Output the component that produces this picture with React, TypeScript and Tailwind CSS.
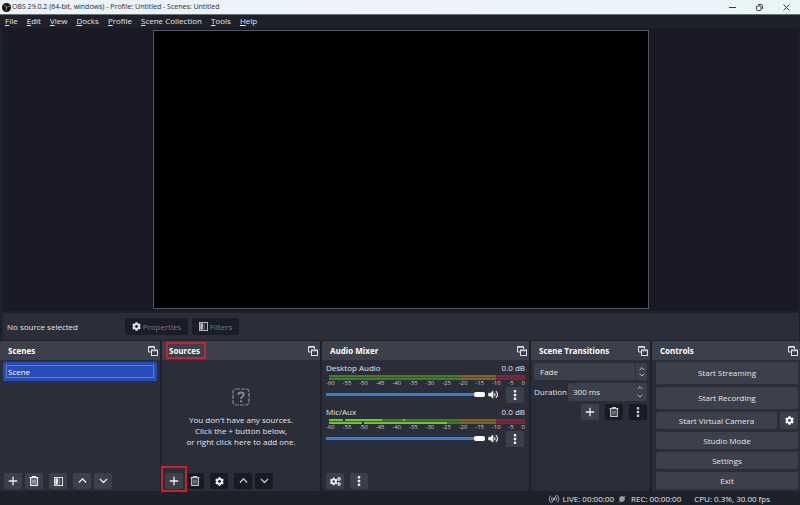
import { useState } from 'react';
import type { ReactNode } from 'react';
import { clsx } from 'clsx';
import { FaCog, FaCogs } from 'react-icons/fa';

const menus = ['File', 'Edit', 'View', 'Docks', 'Profile', 'Scene Collection', 'Tools', 'Help'];

const ticks = ['-60', '-55', '-50', '-45', '-40', '-35', '-30', '-25', '-20', '-15', '-10', '-5', '0'];

const channels = [
  { name: 'Desktop Audio', active: false },
  { name: 'Mic/Aux', active: true },
];

function ObsLogo() {
  return (
    <svg viewBox="0 0 20 20" className="size-[9px] shrink-0">
      <circle cx="10" cy="10" r="10" fill="#111" />
      <g fill="none" stroke="#b5bcc0" strokeWidth="1.6" strokeLinecap="round">
        <path d="M7 4c-1 3 0 5 3 6" />
        <path d="M16 8c-3-1.500-5 0-6 2" />
        <path d="M8 16c2.500-1.500 3-4 2-6" />
      </g>
    </svg>
  );
}

function PopOutIcon() {
  return (
    <svg viewBox="0 0 10 10" className="size-[10px]" fill="none" stroke="#dfe1e6">
      <path d="M3 6H.5V.500H6.500V3" />
      <path d="M.5 1.200H6.500" />
      <rect x="3.500" y="4" width="6" height="5.500" />
      <path d="M3.500 4.700H9.500" />
    </svg>
  );
}

function PlusIcon() {
  return (
    <svg viewBox="0 0 10 10" className="size-[10px]" stroke="currentColor" strokeWidth="1.300">
      <path d="M5 .8V9.200M.8 5H9.200" />
    </svg>
  );
}

function TrashIcon() {
  return (
    <svg viewBox="0 0 10 10" className="size-[10px]" fill="none" stroke="currentColor">
      <path d="M.6 1.700H9.400M3.500 1.300V.600H6.500V1.300" strokeWidth="1.200" />
      <path d="M1.700 2V9.300H8.300V2" strokeWidth="1.200" />
      <path d="M3.800 3.500V7.700M5 3.500V7.700M6.200 3.500V7.700" strokeWidth=".7" />
    </svg>
  );
}

function FilterIcon() {
  return (
    <svg viewBox="0 0 10 10" className="size-[9px]">
      <rect x=".5" y=".5" width="9" height="9" fill="none" stroke="currentColor" />
      <rect x="1.500" y="1.500" width="2.800" height="7" fill="currentColor" />
      <rect x="5.200" y="1.500" width="1.500" height="7" fill="currentColor" opacity=".45" />
    </svg>
  );
}

function Chevron({ down = false, small = false }: { down?: boolean; small?: boolean }) {
  return (
    <svg viewBox="0 0 10 6" className={small ? 'w-[6px]' : 'w-[9px]'} fill="none" stroke="currentColor" strokeWidth="1.500">
      <path d={down ? 'M1 1l4 4 4-4' : 'M1 5l4-4 4 4'} />
    </svg>
  );
}

function DotsIcon() {
  return (
    <svg viewBox="0 0 4 10" className="h-[10px]" fill="currentColor">
      <rect x=".8" y="0" width="2.400" height="2.400" rx=".5" />
      <rect x=".8" y="3.800" width="2.400" height="2.400" rx=".5" />
      <rect x=".8" y="7.600" width="2.400" height="2.400" rx=".5" />
    </svg>
  );
}

function SpeakerIcon() {
  return (
    <svg viewBox="0 0 12 10" className="w-[11px]" fill="none" stroke="#f0f0f2" strokeWidth="1.200">
      <path d="M.5 3.500H2.500L5.500 1V9L2.500 6.500H.5Z" fill="#f0f0f2" strokeWidth=".6" />
      <path d="M7 3.300q1.300 1.700 0 3.400M8.600 1.300q3.600 3.700 0 7.400" />
    </svg>
  );
}

function LiveIcon() {
  return (
    <svg viewBox="0 0 12 10" className="w-3" fill="none" stroke="#b0b2ba" strokeWidth=".9">
      <path d="M2.500 1.500q-3 3.500 0 7M4.300 3q-1.600 2 0 4M9.500 1.500q3 3.500 0 7M7.700 3q1.600 2 0 4" />
      <circle cx="6" cy="5" r=".8" fill="#b0b2ba" />
      <path d="M3.500 9L8.500 1" />
    </svg>
  );
}

function RecIcon() {
  return (
    <svg viewBox="0 0 10 10" className="w-2" fill="none" stroke="#b0b2ba">
      <circle cx="5" cy="5" r="3" fill="#8d9099" />
      <path d="M1 9.500L9.500 1" />
    </svg>
  );
}

function ToolButton({ label, dark, children }: { label: string; dark?: boolean; children: ReactNode }) {
  return (
    <button
      aria-label={label}
      className={clsx(
        'flex h-4 w-[18px] items-center justify-center rounded-xs',
        dark ? 'bg-[#181a24] text-[#c6c8ce]' : 'bg-[#3c404b] text-[#eeeff2]'
      )}
    >
      {children}
    </button>
  );
}

function Dock({ title, marked, children }: { title: string; marked?: boolean; children: ReactNode }) {
  return (
    <section className="flex min-w-0 flex-col rounded-xs bg-[#2b2d38]">
      <header className="flex h-[19px] items-center justify-between rounded-t-xs bg-[#3c404b] pr-0.5">
        <h2
          className={clsx(
            'text-[8px] font-bold text-white',
            marked ? 'ml-1 border-2 border-[#c9222f] pr-1 pl-px leading-[13px]' : 'ml-2 leading-[14px]'
          )}
        >
          {title}
        </h2>
        <button aria-label={`Pop out ${title}`}>
          <PopOutIcon />
        </button>
      </header>
      {children}
    </section>
  );
}

function Meter({ active }: { active: boolean }) {
  return (
    <div className="relative ml-[3px] flex h-[5px]">
      <div className="w-[67%] bg-[#437a24]" />
      <div className="w-[18%] bg-[#7d6525]" />
      <div className="w-[15%] bg-[#7f2637]" />
      <div className="absolute inset-x-0 top-0.5 h-px bg-[#2b2d38]/40" />
      {active && (
        <>
          <div className="absolute top-0 left-0 h-0.5 w-[27%] bg-[#72c432]" />
          <div className="absolute top-[3px] left-0 h-0.5 w-[60%] bg-[#72c432]" />
          <div className="absolute top-0 left-[7%] h-0.5 w-0.5 bg-[#15240e]" />
          <div className="absolute top-[3px] left-[17%] h-0.5 w-0.5 bg-[#15240e]" />
          <div className="absolute top-0 left-[38%] h-0.5 w-0.5 bg-[#72c432]" />
        </>
      )}
    </div>
  );
}

function Channel({ name, active }: { name: string; active: boolean }) {
  const [volume, setVolume] = useState(100);

  return (
    <div className="h-11 pr-1 pl-1">
      <div className="mb-px flex h-3 items-center justify-between leading-3">
        <span>{name}</span>
        <span>0.0 dB</span>
      </div>
      <Meter active={active} />
      <div className="flex h-[7px] justify-between text-[6px] leading-[7px] text-[#c9cbd1]">
        {ticks.map((tick) => (
          <span key={tick}>{tick}</span>
        ))}
      </div>
      <div className="flex h-[15px] items-center">
        <input
          type="range"
          aria-label={`${name} volume`}
          value={volume}
          onChange={(e) => setVolume(Number(e.target.value))}
          className="h-[5px] min-w-0 flex-1 appearance-none bg-transparent [&::-webkit-slider-runnable-track]:h-[5px] [&::-webkit-slider-runnable-track]:border-y [&::-webkit-slider-runnable-track]:border-[#2b2d38] [&::-webkit-slider-runnable-track]:bg-[#2f80d0] [&::-webkit-slider-thumb]:-mt-px [&::-webkit-slider-thumb]:h-[5px] [&::-webkit-slider-thumb]:w-[11px] [&::-webkit-slider-thumb]:appearance-none [&::-webkit-slider-thumb]:rounded-xs [&::-webkit-slider-thumb]:bg-white"
        />
        <button aria-label={`Mute ${name}`} className="mr-[7px] ml-[3px]">
          <SpeakerIcon />
        </button>
        <ToolButton label={`${name} options`}>
          <DotsIcon />
        </ToolButton>
        <div className="w-px" />
      </div>
    </div>
  );
}

function ControlButton({ tall, children }: { tall?: boolean; children: ReactNode }) {
  return (
    <button className={clsx('min-w-0 flex-1 rounded-xs bg-[#3c404b] text-center', tall ? 'h-[22px]' : 'h-[17px]')}>
      {children}
    </button>
  );
}

function App() {
  const [duration, setDuration] = useState('300 ms');

  return (
    <div className="flex h-screen min-h-[420px] flex-col bg-[#1f212a] font-['Open_Sans',sans-serif] text-[8px] leading-3 text-[#e4e5e9]">
      <div className="flex h-[15px] items-center border-b border-[#6c7078] bg-linear-to-r from-[#eaf3f6] via-[#eef2fb] to-[#e9f5f5] pl-0.5 text-[#2a2c30]">
        <ObsLogo />
        <h1 className="ml-px flex-1 text-[7px]">
          OBS 29.0.2 (64-bit, windows) - Profile: Untitled - Scenes: Untitled
        </h1>
        <div className="flex items-center gap-5 pr-2.5 text-[#3a3c40]">
          <button aria-label="Minimize">
            <svg viewBox="0 0 7 7" className="size-[7px]" stroke="currentColor">
              <path d="M0 3.500H7" />
            </svg>
          </button>
          <button aria-label="Restore">
            <svg viewBox="0 0 7 7" className="size-[7px]" fill="none" stroke="currentColor">
              <rect x=".5" y="2" width="4.500" height="4.500" rx="1" />
              <path d="M2 .500H5.200Q6.500.500 6.500 1.800V5" />
            </svg>
          </button>
          <button aria-label="Close">
            <svg viewBox="0 0 7 7" className="size-[7px]" stroke="currentColor">
              <path d="M.5.500L6.500 6.500M6.500.500L.5 6.500" />
            </svg>
          </button>
        </div>
      </div>

      <nav className="flex h-[13px] items-center gap-[9px] pb-0.5 pl-[5px]">
        {menus.map((menu) => (
          <button key={menu}>
            <span className="underline">{menu[0]}</span>
            {menu.slice(1)}
          </button>
        ))}
      </nav>

      <main className="mr-px ml-[3px] flex min-h-0 flex-1 justify-center bg-[#191a25] pt-0.5 pb-0.5">
        <div className="aspect-video border border-[#555863] bg-black" />
      </main>

      <div className="mr-px ml-[3px] mt-0.5 flex h-[27px] items-center rounded-xs bg-[#2b2d38] pl-1">
        <span className="w-[118px]">No source selected</span>
        <button className="flex h-[17px] w-[63px] items-center justify-center gap-0.5 rounded-xs bg-[#1a1c27] text-[#777a84]">
          <FaCog className="size-[9px] text-[#e4e5e9]" />
          Properties
        </button>
        <button className="ml-1 flex h-[17px] w-[47px] items-center justify-center gap-0.5 rounded-xs bg-[#1a1c27] text-[#777a84]">
          <span className="text-[#c6c8ce]">
            <FilterIcon />
          </span>
          Filters
        </button>
      </div>

      <div className="mt-px grid h-[150px] shrink-0 grid-cols-[160fr_158fr_207fr_119fr_148fr] gap-0.5">
        <Dock title="Scenes">
          <ul className="flex-1 px-[3px] pt-0.5">
            <li className="rounded-xs bg-[#284cb8] p-[3px]">
              <button className="block w-full border border-[#5c7ad0] text-left leading-[11px] text-white">
                <span className="ml-px">Scene</span>
              </button>
            </li>
          </ul>
          <div className="flex gap-[3px] px-1 pb-0.5">
            <ToolButton label="Add scene"><PlusIcon /></ToolButton>
            <ToolButton label="Remove scene"><TrashIcon /></ToolButton>
            <div />
            <ToolButton label="Scene filters"><FilterIcon /></ToolButton>
            <div />
            <ToolButton label="Move scene up"><Chevron /></ToolButton>
            <ToolButton label="Move scene down"><Chevron down /></ToolButton>
          </div>
        </Dock>

        <Dock title="Sources" marked>
          <div className="flex flex-1 flex-col items-center justify-center pt-0.5 text-center leading-[11px]">
            <svg viewBox="0 0 18 18" className="mb-2 size-[18px]" fill="none" stroke="#8a8d96" strokeWidth="1.200">
              <rect x="1" y="1" width="16" height="16" rx="3" strokeDasharray="4 1.200" />
              <path d="M6.300 6.700Q6.300 4.500 9 4.500T11.700 6.800Q11.700 8 10.300 8.800Q9 9.500 9 11" strokeWidth="1.800" />
              <path d="M9 12.300V14.200" strokeWidth="1.800" />
            </svg>
            <p>You don't have any sources.</p>
            <p>Click the + button below,</p>
            <p>or right click here to add one.</p>
          </div>
          <div className="flex gap-[3px] px-[3px] pb-0.5">
            <div className="relative">
              <ToolButton label="Add source"><PlusIcon /></ToolButton>
              <div className="pointer-events-none absolute -inset-x-1 -top-[7px] -bottom-[3px] border-2 border-[#c9222f]" />
            </div>
            <ToolButton label="Remove source" dark><TrashIcon /></ToolButton>
            <div />
            <ToolButton label="Source properties" dark><FaCog className="size-[9px] text-[#eeeff2]" /></ToolButton>
            <div />
            <ToolButton label="Move source up" dark><Chevron /></ToolButton>
            <ToolButton label="Move source down" dark><Chevron down /></ToolButton>
          </div>
        </Dock>

        <Dock title="Audio Mixer">
          <div className="flex-1 pt-0.5">
            {channels.map((channel) => (
              <Channel key={channel.name} name={channel.name} active={channel.active} />
            ))}
          </div>
          <div className="flex gap-1.5 px-1 pb-0.5">
            <ToolButton label="Advanced audio properties"><FaCogs className="size-[11px]" /></ToolButton>
            <ToolButton label="Mixer options"><DotsIcon /></ToolButton>
          </div>
        </Dock>

        <Dock title="Scene Transitions">
          <div className="flex flex-col gap-[3px] px-[3px] pt-[3px]">
            <div className="relative">
              <select
                aria-label="Transition"
                className="h-[17px] w-full appearance-none rounded-xs bg-[#3c404b] pl-1.5"
              >
                <option>Fade</option>
                <option>Cut</option>
              </select>
              <div className="pointer-events-none absolute inset-y-0 right-0 flex w-3 flex-col items-center justify-center gap-0.5 border-l border-[#2b2d38] text-[#c6c8ce]">
                <Chevron small />
                <Chevron small down />
              </div>
            </div>
            <div className="flex h-[18px] items-center justify-between">
              <label htmlFor="duration">Duration</label>
              <div className="flex h-full w-[79px] items-center rounded-xs bg-[#3c404b] pr-1 pl-[5px]">
                <input
                  id="duration"
                  value={duration}
                  onChange={(e) => setDuration(e.target.value)}
                  className="min-w-0 flex-1 bg-transparent outline-none"
                />
                <div className="flex flex-col gap-1 text-[#c6c8ce]">
                  <button aria-label="Increase duration"><Chevron small /></button>
                  <button aria-label="Decrease duration"><Chevron small down /></button>
                </div>
              </div>
            </div>
            <div className="flex justify-end gap-1.5">
              <ToolButton label="Add transition"><PlusIcon /></ToolButton>
              <ToolButton label="Remove transition" dark><TrashIcon /></ToolButton>
              <ToolButton label="Transition options" dark><DotsIcon /></ToolButton>
            </div>
          </div>
        </Dock>

        <Dock title="Controls">
          <div className="flex flex-col gap-[3px] pt-0.5 pr-0.5 pl-1">
            <div className="flex"><ControlButton tall>Start Streaming</ControlButton></div>
            <div className="flex"><ControlButton tall>Start Recording</ControlButton></div>
            <div className="flex gap-[3px]">
              <ControlButton>Start Virtual Camera</ControlButton>
              <button aria-label="Virtual camera settings" className="flex h-[17px] w-[18px] items-center justify-center rounded-xs bg-[#3c404b]">
                <FaCog className="size-[9px] text-white" />
              </button>
            </div>
            <div className="flex"><ControlButton>Studio Mode</ControlButton></div>
            <div className="flex"><ControlButton>Settings</ControlButton></div>
            <div className="flex"><ControlButton>Exit</ControlButton></div>
          </div>
        </Dock>
      </div>

      <footer className="flex h-[14px] shrink-0 items-center justify-end pt-0.5 pr-[30px]">
        <LiveIcon />
        <span className="mr-1 ml-[3px]">LIVE: 00:00:00</span>
        <RecIcon />
        <span className="mr-[13px] ml-[5px]">REC: 00:00:00</span>
        <span>CPU: 0.3%, 30.00 fps</span>
      </footer>
    </div>
  );
}

export default App;
